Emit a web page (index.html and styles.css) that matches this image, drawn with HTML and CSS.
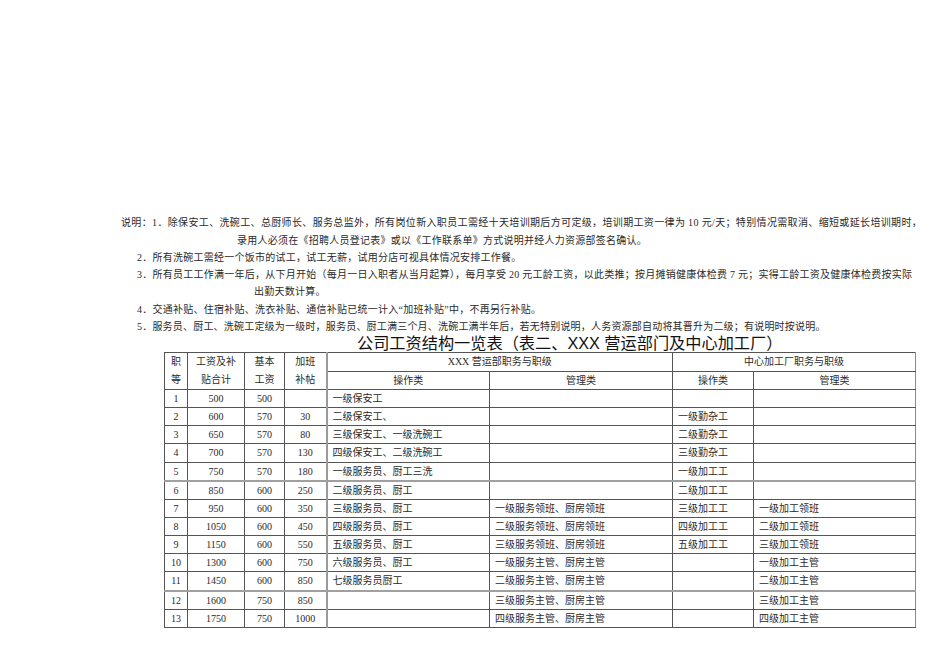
FILE: index.html
```html
<!DOCTYPE html>
<html lang="zh">
<head>
<meta charset="utf-8">
<title>公司工资结构一览表</title>
<link rel="stylesheet" href="styles.css">
</head>
<body>
<div class="page">
  <div class="notes">
    <div class="line l1">说明：1．除保安工、洗碗工、总厨师长、服务总监外，所有岗位新入职员工需经十天培训期后方可定级，培训期工资一律为 10 元/天；特别情况需取消、缩短或延长培训期时，</div>
    <div class="line l2">录用人必须在《招聘人员登记表》或以《工作联系单》方式说明并经人力资源部签名确认。</div>
    <div class="line l3">2．所有洗碗工需经一个饭市的试工，试工无薪，试用分店可视具体情况安排工作餐。</div>
    <div class="line l3">3．所有员工工作满一年后，从下月开始（每月一日入职者从当月起算），每月享受 20 元工龄工资，以此类推；按月摊销健康体检费 7 元；实得工龄工资及健康体检费按实际</div>
    <div class="line l5">出勤天数计算。</div>
    <div class="line l3 gap1">4．交通补贴、住宿补贴、洗衣补贴、通信补贴已统一计入“加班补贴”中，不再另行补贴。</div>
    <div class="line l3 tight">5．服务员、厨工、洗碗工定级为一级时，服务员、厨工满三个月、洗碗工满半年后，若无特别说明，人务资源部自动将其晋升为二级；有说明时按说明。</div>
  </div>
  <div class="title">公司工资结构一览表（表二、XXX 营运部门及中心加工厂）</div>
  <table class="grid">
    <colgroup>
      <col class="c1"><col class="c2"><col class="c3"><col class="c4">
      <col class="c5"><col class="c6"><col class="c7"><col class="c8">
    </colgroup>
    <thead>
      <tr class="h">
        <th rowspan="2" class="hc">职<br>等</th>
        <th rowspan="2" class="hc">工资及补<br>贴合计</th>
        <th rowspan="2" class="hc">基本<br>工资</th>
        <th rowspan="2" class="hc">加班<br>补帖</th>
        <th colspan="2" class="sep">XXX 营运部职务与职级</th>
        <th colspan="2" class="last">中心加工厂职务与职级</th>
      </tr>
      <tr class="h">
        <th class="sep">操作类</th>
        <th>管理类</th>
        <th>操作类</th>
        <th class="last">管理类</th>
      </tr>
    </thead>
    <tbody>
      <tr><td class="n">1</td><td class="n">500</td><td class="n">500</td><td class="n"></td><td class="t sep">一级保安工</td><td class="t"></td><td class="t"></td><td class="t last"></td></tr>
      <tr><td class="n">2</td><td class="n">600</td><td class="n">570</td><td class="n">30</td><td class="t sep">二级保安工、</td><td class="t"></td><td class="t">一级勤杂工</td><td class="t last"></td></tr>
      <tr><td class="n">3</td><td class="n">650</td><td class="n">570</td><td class="n">80</td><td class="t sep">三级保安工、一级洗碗工</td><td class="t"></td><td class="t">二级勤杂工</td><td class="t last"></td></tr>
      <tr><td class="n">4</td><td class="n">700</td><td class="n">570</td><td class="n">130</td><td class="t sep">四级保安工、二级洗碗工</td><td class="t"></td><td class="t">三级勤杂工</td><td class="t last"></td></tr>
      <tr class="gb"><td class="n">5</td><td class="n">750</td><td class="n">570</td><td class="n">180</td><td class="t sep">一级服务员、厨工三洗</td><td class="t"></td><td class="t">一级加工工</td><td class="t last"></td></tr>
      <tr><td class="n">6</td><td class="n">850</td><td class="n">600</td><td class="n">250</td><td class="t sep">二级服务员、厨工</td><td class="t"></td><td class="t">二级加工工</td><td class="t last"></td></tr>
      <tr><td class="n">7</td><td class="n">950</td><td class="n">600</td><td class="n">350</td><td class="t sep">三级服务员、厨工</td><td class="t">一级服务领班、厨房领班</td><td class="t">三级加工工</td><td class="t last">一级加工领班</td></tr>
      <tr><td class="n">8</td><td class="n">1050</td><td class="n">600</td><td class="n">450</td><td class="t sep">四级服务员、厨工</td><td class="t">二级服务领班、厨房领班</td><td class="t">四级加工工</td><td class="t last">二级加工领班</td></tr>
      <tr><td class="n">9</td><td class="n">1150</td><td class="n">600</td><td class="n">550</td><td class="t sep">五级服务员、厨工</td><td class="t">三级服务领班、厨房领班</td><td class="t">五级加工工</td><td class="t last">三级加工领班</td></tr>
      <tr><td class="n">10</td><td class="n">1300</td><td class="n">600</td><td class="n">750</td><td class="t sep">六级服务员、厨工</td><td class="t">一级服务主管、厨房主管</td><td class="t"></td><td class="t last">一级加工主管</td></tr>
      <tr class="gb"><td class="n">11</td><td class="n">1450</td><td class="n">600</td><td class="n">850</td><td class="t sep">七级服务员厨工</td><td class="t">二级服务主管、厨房主管</td><td class="t"></td><td class="t last">二级加工主管</td></tr>
      <tr><td class="n">12</td><td class="n">1600</td><td class="n">750</td><td class="n">850</td><td class="t sep"></td><td class="t">三级服务主管、厨房主管</td><td class="t"></td><td class="t last">三级加工主管</td></tr>
      <tr><td class="n">13</td><td class="n">1750</td><td class="n">750</td><td class="n">1000</td><td class="t sep"></td><td class="t">四级服务主管、厨房主管</td><td class="t"></td><td class="t last">四级加工主管</td></tr>
    </tbody>
  </table>
</div>
</body>
</html>
```
FILE: styles.css
```css
html, body {
  margin: 0;
  padding: 0;
  background: #fff;
}
body {
  font-family: "Liberation Serif", "Noto Sans CJK SC", serif;
  color: #2a2a2a;
  width: 950px;
  height: 672px;
  overflow: hidden;
}
.page {
  padding-top: 214px;
}
.notes {
  font-size: 10px;
}
.line {
  line-height: 17px;
  height: 17px;
  white-space: nowrap;
  letter-spacing: 0.25px;
}
.l1 { padding-left: 121px; letter-spacing: 0.35px; }
.l2 { padding-left: 237px; margin-top: 1px; }
.l3 { padding-left: 137px; }
.l5 { padding-left: 254px; }
.gap1 { margin-top: 1px; }
.tight { letter-spacing: 0.2px; }

.title {
  font-family: "Liberation Sans", "Noto Sans CJK SC", sans-serif;
  font-size: 16.2px;
  line-height: 18px;
  height: 18px;
  padding-left: 357px;
  margin-top: -1px;
  color: #111;
  white-space: nowrap;
}

.grid {
  margin-left: 164px;
  margin-top: 0;
  width: 751px;
  border-collapse: collapse;
  table-layout: fixed;
  font-size: 10px;
  color: #2a2a2a;
}
.c1 { width: 23px; }
.c2 { width: 57px; }
.c3 { width: 40px; }
.c4 { width: 42px; }
.c5 { width: 163px; }
.c6 { width: 183px; }
.c7 { width: 81px; }
.c8 { width: 162px; }

.grid th, .grid td {
  border: 1px solid #555;
  padding: 0;
  overflow: hidden;
  white-space: nowrap;
}
.grid th {
  font-weight: normal;
  text-align: center;
  height: 17px;
  line-height: 17px;
}
.grid th.hc {
  line-height: 18px;
}
.grid td {
  height: 17.15px;
  line-height: 17px;
}
.grid td.n {
  text-align: center;
}
.grid td.t {
  text-align: left;
  padding-left: 5px;
}
.grid .sep {
  border-left: 2px solid #9a9a9a;
}
.grid .last {
  border-right: 1px solid #8a8a8a;
}
.grid tr.gb td {
  border-bottom: 2px solid #a0a0a0;
}
```
